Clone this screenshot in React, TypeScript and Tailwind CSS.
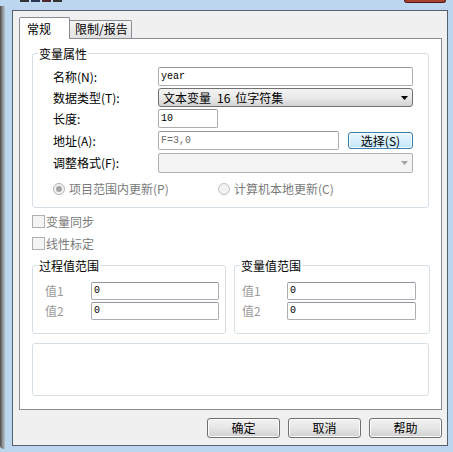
import React from "react";

const mono = "font-['Liberation_Mono',monospace] text-[10px]";

function Input({ w, text, gray, h = 19 }: { w: number; text: string; gray?: boolean; h?: number }) {
  return (
    <div
      className={`flex items-center border border-[#abadb3] border-t-[#8f959c] rounded-[2px] bg-white pl-[2px] ${mono} ${gray ? "text-[#6d6d6d]" : "text-black"}`}
      style={{ width: w, height: h }}
    >
      {text}
    </div>
  );
}

function Group({ label, className, children }: { label: string; className: string; children?: React.ReactNode }) {
  return (
    <div className={`relative border border-[#d5dfe5] rounded-[3px] ${className}`}>
      <div className="absolute left-[5px] top-[-7px] px-[1px] bg-white leading-[14px] text-black">{label}</div>
      {children}
    </div>
  );
}

function Btn({ children }: { children: React.ReactNode }) {
  return (
    <div className="w-[73px] h-[20px] flex items-center justify-center border border-[#707070] rounded-[3px] bg-gradient-to-b from-[#f2f2f2] via-[#e6e6e6] to-[#cfcfcf] shadow-[inset_0_0_0_1px_#fcfcfc] leading-[14px]">
      {children}
    </div>
  );
}

export default function App() {
  return (
    <div className="w-[453px] h-[452px] overflow-hidden flex bg-[#bdd6f0] font-['Noto_Sans_CJK_SC',sans-serif] text-[12px] leading-[14px] text-black">
      <div className="w-[5px] mt-[6px] mb-[3px] rounded-bl-[4px] bg-gradient-to-r from-[#4b4b4b] via-[#8e8e8e] to-[#b4c3d2]" />
      <div className="flex-1 flex flex-col pl-[7px] pr-[5px] pb-[6px]">
        {/* title strip */}
        <div className="h-[10px] flex justify-between items-start">
          <div className="ml-[8px] w-[42px] h-[3px] flex gap-[2px] blur-[0.4px]">
            <div className="w-[10px] h-[2px] bg-[#333]" />
            <div className="w-[9px] h-[2px] bg-[#2a3550]" />
            <div className="w-[10px] h-[2px] bg-[#502a2a]" />
            <div className="w-[9px] h-[2px] bg-[#333]" />
          </div>
          <div className="mr-[2px] w-[42px] h-[3px] bg-[#a8402f] border-x border-b border-[#4f1a12] rounded-b-[3px]" />
        </div>
        {/* client */}
        <div className="flex-1 border border-[#56616e] bg-[#f0f0f0] flex flex-col pl-[6px] pt-[6px]">
          {/* tabs */}
          <div className="h-[21px] flex items-end">
            <div className="relative z-10 w-[51px] h-[22px] -mb-px border border-b-0 border-[#898c95] rounded-t-[2px] bg-white pl-[7px] pt-[4px]">
              常规
            </div>
            <div className="w-[62px] h-[18px] border border-l-0 border-b-0 border-[#898c95] rounded-tr-[2px] bg-gradient-to-b from-[#f6f6f6] to-[#e1e1e1] pl-[5px] pt-[1px]">
              限制/报告
            </div>
          </div>
          {/* panel */}
          <div className="w-[423px] h-[372px] border border-[#898c95] bg-white pl-[12px] pt-[14px] flex flex-col">
            <Group label="变量属性" className="w-[397px] h-[155px] pl-[20px] pt-[13px] flex flex-col">
              <div className="flex items-center h-[19px]">
                <div className="w-[105px]">名称(N):</div>
                <Input w={255} text="year" />
              </div>
              <div className="flex items-center h-[19px] mt-[2px]">
                <div className="w-[105px]">数据类型(T):</div>
                <div className="w-[255px] h-[19px] flex items-center justify-between border border-[#707070] rounded-[3px] bg-gradient-to-b from-[#f4f4f4] via-[#e9e9e9] to-[#d3d3d3] pl-[4px] pr-[4px]">
                  <span>
                    文本变量<span className="ml-[6px] mr-[5px]">16</span>位字符集
                  </span>
                  <svg width="7" height="4" viewBox="0 0 7 4">
                    <path d="M0 0h7L3.5 4z" fill="#000" />
                  </svg>
                </div>
              </div>
              <div className="flex items-center h-[19px] mt-[2px]">
                <div className="w-[105px]">长度:</div>
                <Input w={60} text="10" />
              </div>
              <div className="flex items-center h-[19px] mt-[3px]">
                <div className="w-[105px]">地址(A):</div>
                <Input w={181} text="F=3,0" gray />
                <div className="ml-[9px] w-[65px] h-[17px] flex items-center justify-center border border-[#3c7fb1] rounded-[3px] bg-gradient-to-b from-[#eaf6fd] via-[#d9f0fc] to-[#bee6fd] shadow-[inset_0_0_0_1px_#f4fbff]">
                  选择(S)
                </div>
              </div>
              <div className="flex items-center h-[19px] mt-[3px]">
                <div className="w-[105px]">调整格式(F):</div>
                <div className="w-[255px] h-[20px] flex items-center justify-end border border-[#adb2b5] rounded-[2px] bg-[#f4f4f4] pr-[4px]">
                  <svg width="7" height="4" viewBox="0 0 7 4">
                    <path d="M0 0h7L3.5 4z" fill="#a3a3a3" />
                  </svg>
                </div>
              </div>
              <div className="flex items-center h-[13px] mt-[10px] text-[#7a7a7a]">
                <div className="w-[165px] flex items-center">
                  <div className="w-[12px] h-[12px] rounded-full border border-[#b3b3b3] bg-[#f2f2f2] flex items-center justify-center">
                    <div className="w-[6px] h-[6px] rounded-full bg-[#a6a6a6]" />
                  </div>
                  <span className="ml-[4px]">项目范围内更新(P)</span>
                </div>
                <div className="flex items-center">
                  <div className="w-[12px] h-[12px] rounded-full border border-[#c2c2c2] bg-[#f2f2f2]" />
                  <span className="ml-[4px]">计算机本地更新(C)</span>
                </div>
              </div>
            </Group>

            <div className="flex items-center h-[13px] mt-[7px] text-[#7a7a7a]">
              <div className="w-[13px] h-[13px] border border-[#b1b1b1] bg-[#f4f4f4]" />
              <span className="ml-[1px]">变量同步</span>
            </div>
            <div className="flex items-center h-[13px] mt-[9px] text-[#7a7a7a]">
              <div className="w-[13px] h-[13px] border border-[#b1b1b1] bg-[#f4f4f4]" />
              <span className="ml-[1px]">线性标定</span>
            </div>

            <div className="flex mt-[15px] gap-[8px]">
              <Group label="过程值范围" className="w-[194px] h-[69px] pl-[12px] pt-[16px] flex flex-col">
                <div className="flex items-center h-[18px]">
                  <div className="w-[46px] text-[#9a9a9a]">值1</div>
                  <Input w={128} h={18} text="0" />
                </div>
                <div className="flex items-center h-[18px] mt-[2px]">
                  <div className="w-[46px] text-[#9a9a9a]">值2</div>
                  <Input w={128} h={18} text="0" />
                </div>
              </Group>
              <Group label="变量值范围" className="w-[196px] h-[69px] pl-[7px] pt-[16px] flex flex-col">
                <div className="flex items-center h-[18px]">
                  <div className="w-[45px] text-[#9a9a9a]">值1</div>
                  <Input w={129} h={18} text="0" />
                </div>
                <div className="flex items-center h-[18px] mt-[2px]">
                  <div className="w-[45px] text-[#9a9a9a]">值2</div>
                  <Input w={129} h={18} text="0" />
                </div>
              </Group>
            </div>

            <div className="mt-[9px] w-[397px] h-[53px] border border-[#d5dfe5] rounded-[3px]" />
          </div>

          {/* buttons */}
          <div className="w-[423px] mt-[8px] flex justify-end gap-[8px]">
            <Btn>确定</Btn>
            <Btn>取消</Btn>
            <Btn>帮助</Btn>
          </div>
        </div>
      </div>
    </div>
  );
}
